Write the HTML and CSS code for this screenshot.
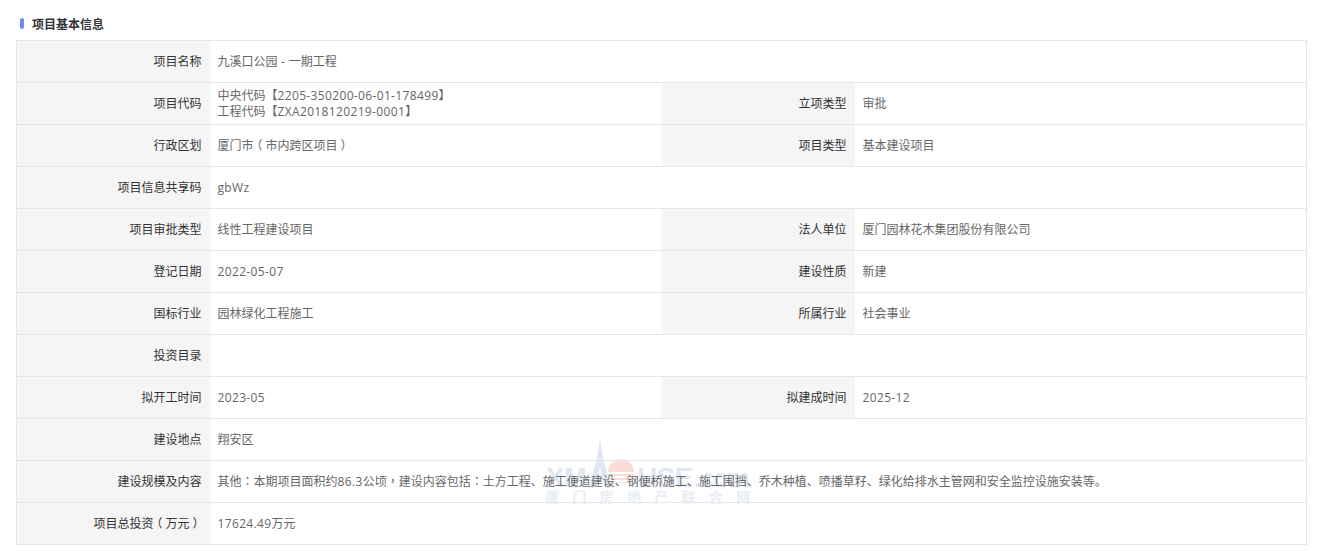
FILE: index.html
```html
<!DOCTYPE html>
<html lang="zh-CN">
<head>
<meta charset="utf-8">
<title>项目基本信息</title>
<link rel="stylesheet" href="styles.css">
</head>
<body>
<section class="panel">
  <h2 class="title"><span class="title-bar"></span>项目基本信息</h2>
  <div class="sheet">
    <div class="mark" aria-hidden="true">
      <svg class="mark-art" width="110" height="56" viewBox="0 0 110 56">
        <path d="M54 0 L57 20 L65 50 H59 L54 30 L49 50 H43 L51 20 Z" fill="#dfe7f3"/>
        <path d="M62 34 A13 13 0 0 1 88 34 Z" fill="#fbdcd7"/>
        <rect x="62" y="36" width="26" height="2" fill="#fbdcd7"/>
        <rect x="64" y="40" width="22" height="2" fill="#fbdcd7"/>
        <rect x="67" y="44" width="16" height="1" fill="#fbdcd7"/>
      </svg>
      <div class="mark-en"><span>XM</span><span class="mark-use">USE</span><span class="mark-com">.com</span></div>
      <div class="mark-cn">厦门房地产联合网</div>
    </div>
    <table class="info">
      <colgroup><col class="c-label"><col class="c-value"><col class="c-label"><col></colgroup>
      <tr><th>项目名称</th><td colspan="3">九溪口公园<span class="lat"> - </span>一期工程</td></tr>
      <tr><th>项目代码</th><td>中央代码【<span class="lat">2205-350200-06-01-178499</span>】<br>工程代码【<span class="lat">ZXA2018120219-0001</span>】</td><th>立项类型</th><td>审批</td></tr>
      <tr><th>行政区划</th><td>厦门市<span class="open">（</span>市内跨区项目<span class="close">）</span></td><th>项目类型</th><td>基本建设项目</td></tr>
      <tr><th>项目信息共享码</th><td colspan="3"><span class="lat">gbWz</span></td></tr>
      <tr><th>项目审批类型</th><td>线性工程建设项目</td><th>法人单位</th><td>厦门园林花木集团股份有限公司</td></tr>
      <tr><th>登记日期</th><td><span class="lat">2022-05-07</span></td><th>建设性质</th><td>新建</td></tr>
      <tr><th>国标行业</th><td>园林绿化工程施工</td><th>所属行业</th><td>社会事业</td></tr>
      <tr><th>投资目录</th><td colspan="3"></td></tr>
      <tr><th>拟开工时间</th><td><span class="lat">2023-05</span></td><th>拟建成时间</th><td><span class="lat">2025-12</span></td></tr>
      <tr><th>建设地点</th><td colspan="3">翔安区</td></tr>
      <tr><th>建设规模及内容</th><td colspan="3">其他<span class="tc" lang="zh-Hant">：</span>本期项目面积约<span class="lat">86.3</span>公顷<span class="tc" lang="zh-Hant">，</span>建设内容包括<span class="tc" lang="zh-Hant">：</span>土方工程、施工便道建设、钢便桥施工、施工围挡、乔木种植、喷播草籽、绿化给排水主管网和安全监控设施安装等。</td></tr>
      <tr><th>项目总投资<span class="open">（</span>万元<span class="close">）</span></th><td colspan="3"><span class="lat">17624.49</span>万元</td></tr>
    </table>
  </div>
</section>
</body>
</html>
```
FILE: styles.css
```css
* { box-sizing: border-box; }
html, body { margin: 0; background: #fff; }
body {
  font-family: "Open Sans", "Noto Sans CJK SC", sans-serif;
  font-size: 12px;
  color: #666;
}
.tc { font-family: "Noto Sans CJK TC", sans-serif; }
.lat { letter-spacing: .35px; white-space: pre; }
.open { margin: 0 3px 0 -3px; }
.close { margin: 0 -3px 0 3px; }
.panel { padding: 0 12px 0 16px; }
.title {
  display: flex;
  align-items: center;
  margin: 0;
  padding: 7px 0 0 4px;
  height: 40px;
  font-size: 12px;
  font-weight: 700;
  color: #333;
}
.title-bar {
  width: 4px;
  height: 11px;
  margin-right: 8px;
  border-radius: 2px;
  background: #6f8cf2;
}
.sheet { position: relative; width: 1291px; }
.info {
  position: relative;
  width: 100%;
  table-layout: fixed;
  border-collapse: collapse;
  border: 1px solid #e6e6e6;
}
.c-label { width: 193px; }
.c-value { width: 452px; }
.info tr { height: 42px; border-top: 1px solid #e6e6e6; }
.info th, .info td { padding: 0 8px; line-height: 16px; vertical-align: middle; }
.info th { background: #f5f5f5; font-weight: 400; color: #333; text-align: right; }
.info td { color: #666; text-align: left; }
.mark {
  position: absolute;
  left: 530px;
  top: 398px;
  width: 206px;
  height: 66px;
  pointer-events: none;
}
.mark-art { position: absolute; left: 0; top: 0; }
.mark-en {
  position: absolute;
  left: 0;
  top: 28px;
  display: flex;
  align-items: baseline;
  font-family: "Liberation Sans", sans-serif;
  font-size: 27px;
  font-weight: 700;
  line-height: 24px;
  color: #dfe7f3;
  white-space: nowrap;
}
.mark-use { margin-left: 51px; }
.mark-com { margin-left: 1px; font-size: 25px; letter-spacing: -1px; }
.mark-cn {
  position: absolute;
  left: -1px;
  top: 50px;
  font-family: "Noto Sans CJK SC", sans-serif;
  font-size: 14px;
  font-weight: 700;
  line-height: 16px;
  letter-spacing: 13.3px;
  color: #e6edf6;
  white-space: nowrap;
}
```
